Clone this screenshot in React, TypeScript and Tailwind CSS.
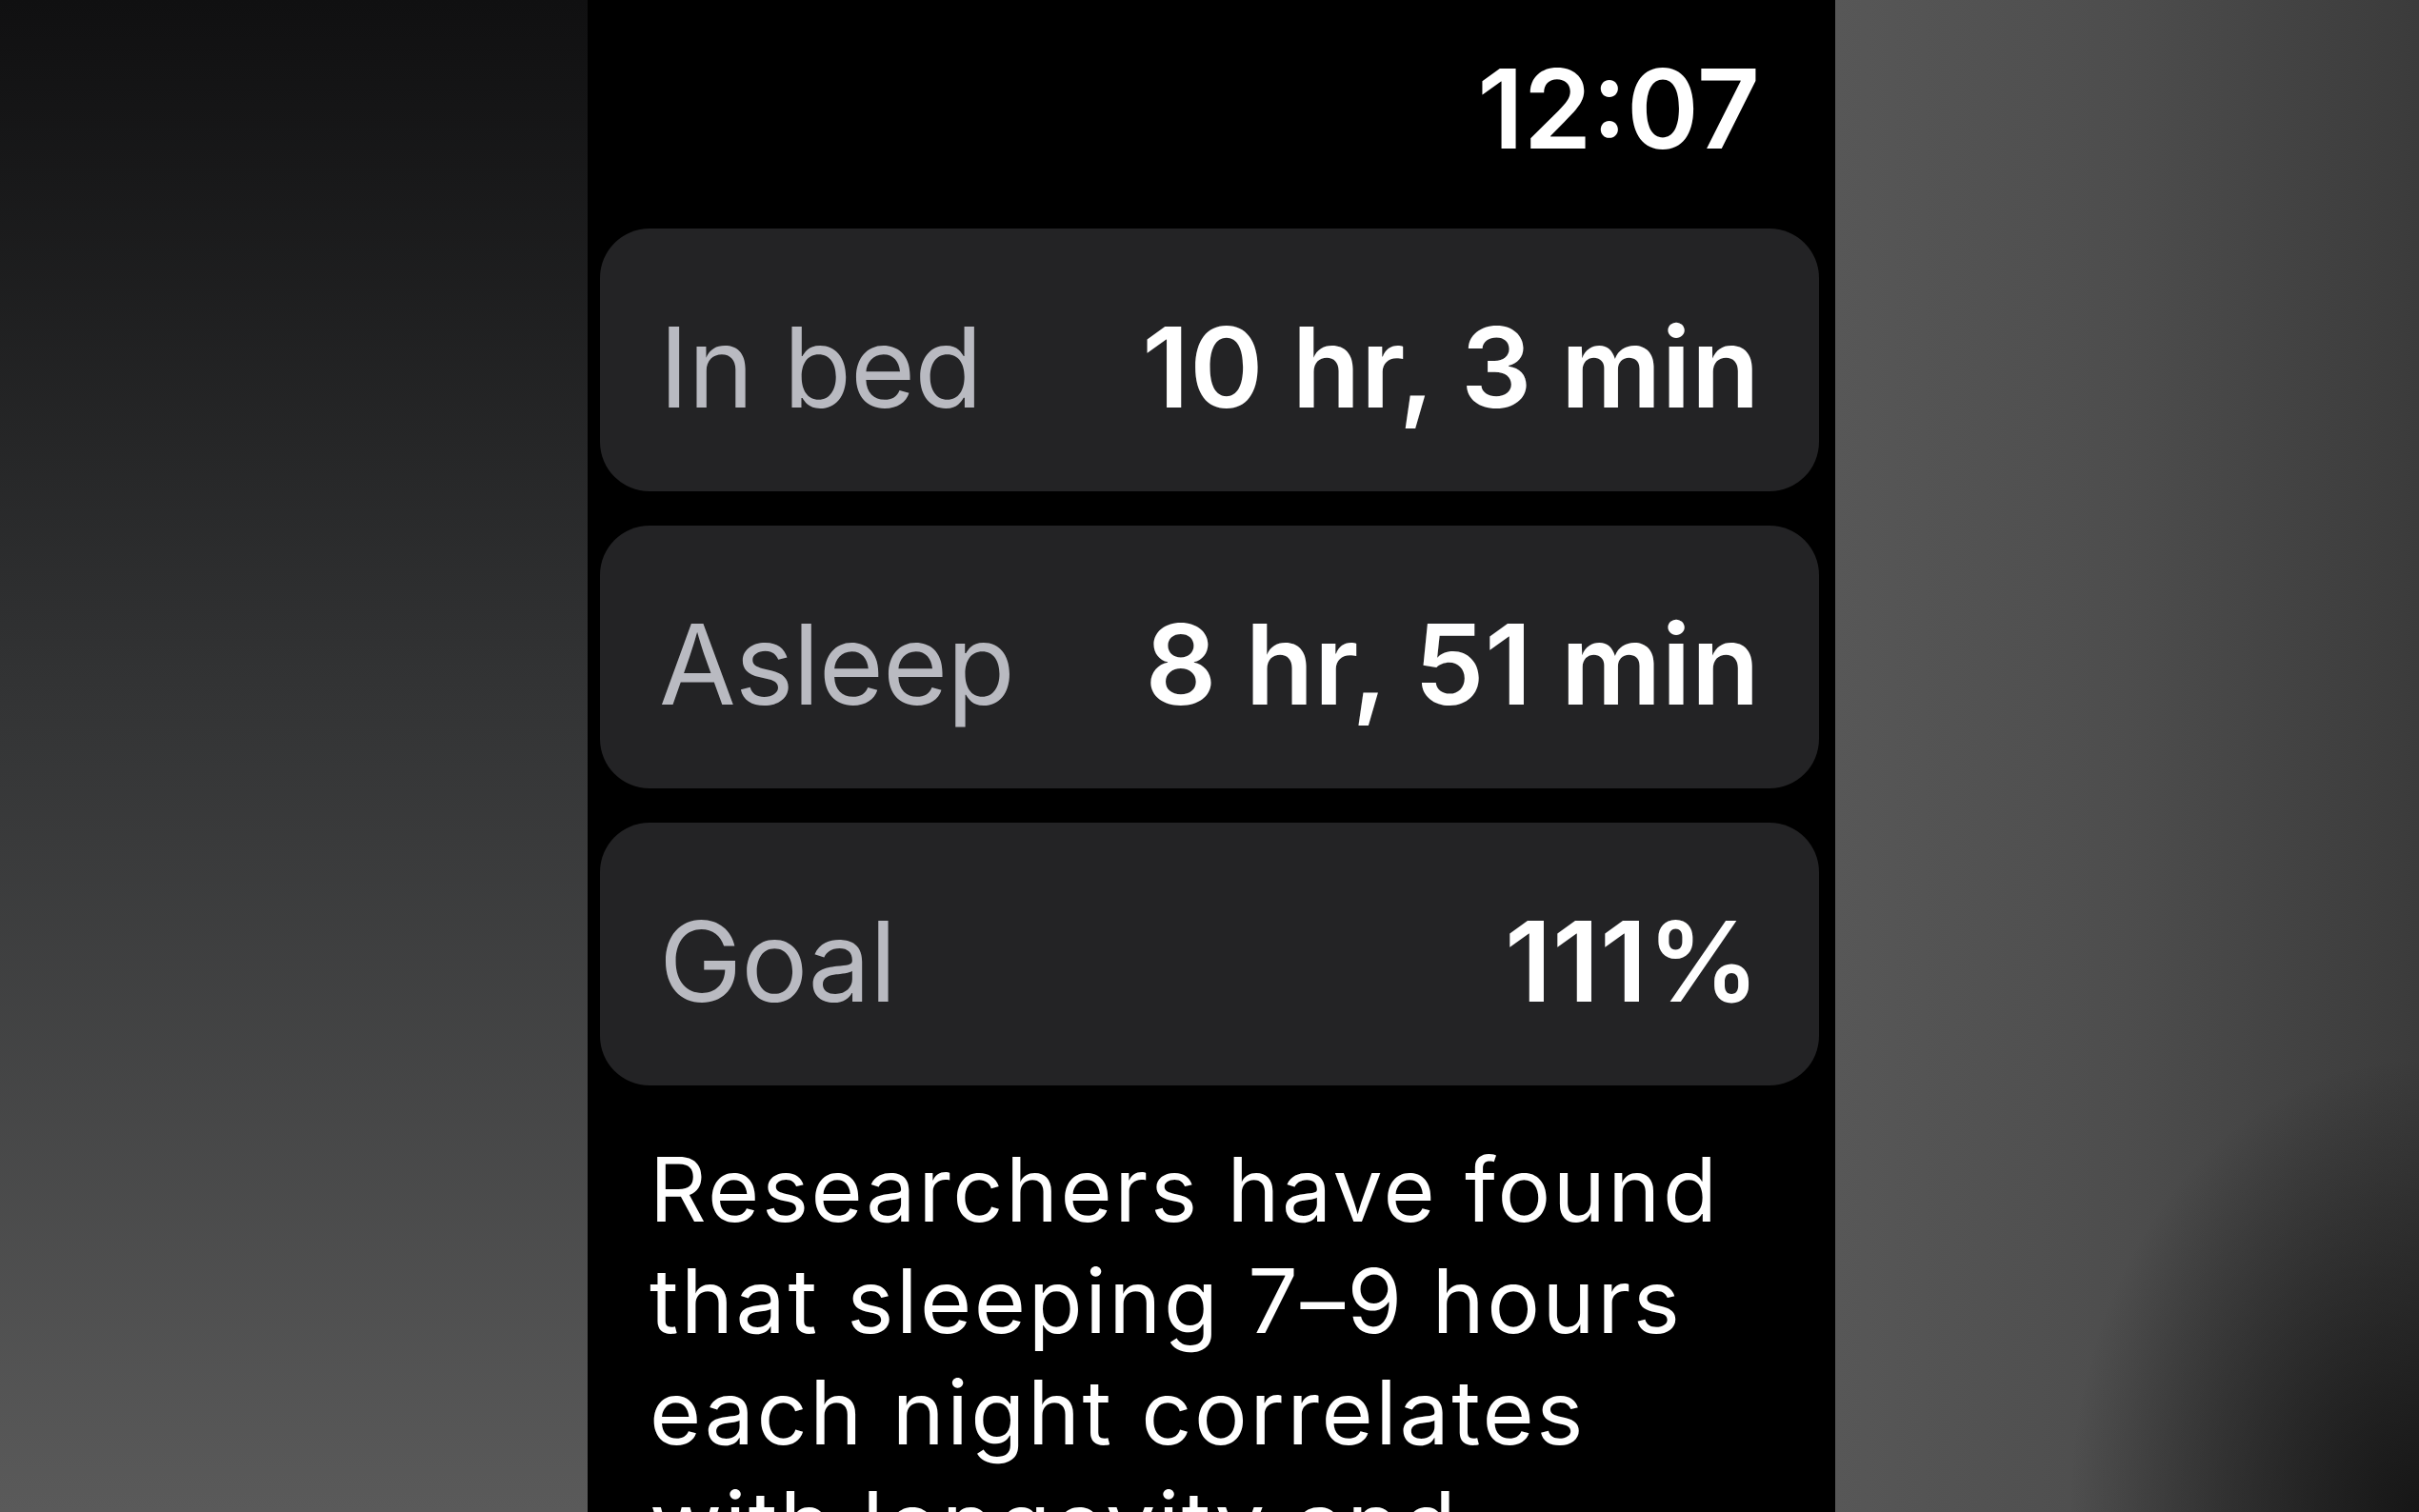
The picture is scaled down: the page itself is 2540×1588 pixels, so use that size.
import React from 'react';

type Stat = { label: string; value: string };

const stats: Stat[] = [
  { label: 'In bed', value: '10 hr, 3 min' },
  { label: 'Asleep', value: '8 hr, 51 min' },
  { label: 'Goal', value: '111%' },
];

// one rounded row: gray label left, bold value right
function StatRow({ label, value }: Stat) {
  return (
    <div className="flex h-[276px] items-center justify-between rounded-[52px] bg-[#232325] px-[62px] pt-[15px] text-[117px] leading-none">
      <span className="font-normal tracking-[-1px] text-[#b9bac1]">{label}</span>
      <span className="font-semibold tracking-[0.5px] text-white">{value}</span>
    </div>
  );
}

export default function App() {
  return (
    <div className="flex h-screen w-screen overflow-hidden bg-black font-['Inter',sans-serif]">
      {/* blurred backdrop, left */}
      <div className="h-full w-[617px] shrink-0 bg-linear-to-b from-[#101011] via-[#323334] via-45% to-[#5a5a5a]" />

      {/* watch screen */}
      <div className="flex h-full w-[1310px] shrink-0 flex-col bg-black pl-[13px] pr-[17px]">
        <div className="mt-[57px] flex justify-end pr-[62px] text-[115px] leading-[115px] font-semibold tracking-[0px] text-white">
          12:07
        </div>

        <div className="mt-[68px] flex flex-col gap-[36px]">
          {stats.map((s) => (
            <StatRow key={s.label} {...s} />
          ))}
        </div>

        <p className="mt-[51px] pl-[52px] text-[93px] leading-[117px] tracking-[2.6px] text-white">
          Researchers have found
          <br />
          that sleeping 7–9 hours
          <br />
          each night correlates
          <br />
          with longevity and
        </p>
      </div>

      {/* blurred backdrop, right */}
      <div className="h-full flex-1 bg-[radial-gradient(ellipse_60%_30%_at_100%_100%,#161616_0%,rgba(22,22,22,0)_100%),linear-gradient(to_right,#575757,#4d4d4d_50%,#3b3b3b)]" />
    </div>
  );
}
